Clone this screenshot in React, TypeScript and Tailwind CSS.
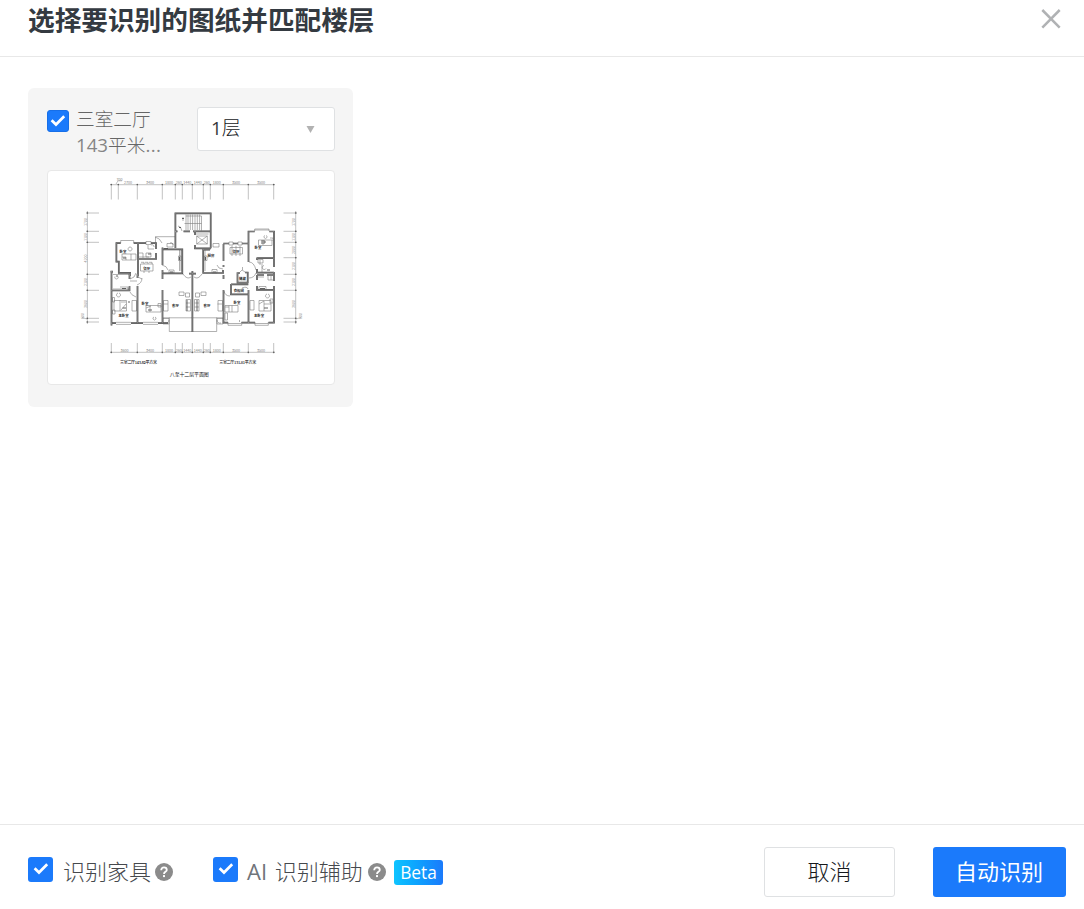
import type { ReactNode } from "react";

const WALLS = [
  "M120.7 243.2H116.4V261.7H118.8V272.9H130V276M133.7 243.2H138V276",
  "M138 243.2H146M151 243.2H156V249M156 253V259H138M111.5 271V325.5M110.5 271.6H113",
  "M162.5 247.5V265M162.5 270V273.3H182.3V249.3H163",
  "M175.4 232.3V213.3H210.7V248.3M175.4 231V248M175 231.4H177.5M183.5 231.4H190M193 231.4H210M195 231V235M195 245V248.3H211",
  "M203.2 249V273H223V270M223.5 244V261M223.5 265V267M223.5 275V279M203.2 249.6H210",
  "M192.4 271V332M189 273.6H196",
  "M223.3 243.5H229M233 243.5H238M242 243.5H248.3M254.7 231.5H248.5V262M269.3 231.5H274V267M274 272V281M274 286V323.5",
  "M256.7 258.2H274.3M257 257.7V260M257 269V272.7H274M257 275H264M267 275H274M257 275V280M257 286V289.8H273",
  "M237.5 272.3V282.5H247.7V272.5H245M237.3 273H240M231 284.3H248.3M231 284V294.3H248.5M248.5 290V323",
  "M223.5 290V322.6H228M241.5 322.6H255M268.5 322.6H274M111.3 290.5H129.5V286M129.5 274V279M137.5 274V278M137.5 286V323M162.5 274V279M162.5 290V323M111 323.2H116M131 323.2H143M158 323.2H168",
];

const FINE = [
  "M120.7 243V240.5H133.7V243M146 241.5H151V244.5H146ZM229 242H233V245H229ZM238 242H242V245H238Z",
  "M254.7 231V229H269V231M254.7 230H269M228 322V325.3H241.7V322M255 322V325.3H268.3V322M116 322.3H131M116 324.4H131M143 322.3H158M143 324.4H158M228 323.5H241M255 323.5H268",
  "M186 216H201.5V230.5M184.5 223.5H201.5M188 214.5V230M190.3 214.5V230M192.6 214.5V230M195 214.5V230M197.3 214.5V230M199.6 214.5V230M186 214.5V230",
  "M196.7 236H207.3V244H196.7ZM196.7 236L207.3 244M207.3 236L196.7 244M195 234H208.5",
  "M155.5 236.7H175M155.5 236.7V243M155 237Q160 238 162 243M167 243.5H173V247H167ZM170 243a2 2 0 0 1 3 2M179.5 250V271M181 250V271M169 270H174V273H169ZM205 250V271M212 269.5H217V273H212ZM213 243.5H219V247H213ZM178.5 256H181V260.5H178.5ZM204.5 256H207V260.5H204.5Z",
  "M162 317.8H223.3M169.3 317.5V331.5H216.7V317.5M163 318.5H169V324H163ZM217 318.5H223V324H217ZM165 323a3 3 0 0 0 4 -3M221 323a3 3 0 0 1 -4 -3",
  "M122 254H136V260H122ZM122 257H126V260M131 254V260M130 247a2 2 0 1 0 .1 0M138.5 253H143V258M148 245V249H154M151 245a2 2 0 0 1 3 2M138 257H149M146 253H151V257H146Z",
  "M140.5 264H153V271H140.5ZM141 262.3H144V264M145 262.3H148V264M149 262.3H152V264M144 271V273M149 271V273M230 247.5H242.5V254H230ZM232 245.8V256M236 245.8V256M240 245.8V256",
  "M113 274.5H129M115 276.5a1.7 1.7 0 1 0 3 0M120 287H128V290M113 289H129M130 281H137M130 279Q135 278 136 273M142 278Q142 283 137 285M130 292Q131 295 136 297M138 277L142 279",
  "M114 300.5H126.5V311H114ZM120 300V311M121 302H126M121 310L126 304M112.5 297.5H114.5V302H112.5ZM112.5 310H115V314H112.5ZM132 300.5H136.5V311H132ZM118 293a2 2 0 1 0 1 0",
  "M146 305.5H161V312H146ZM150 305.5V312M146 308L151 306M158 303.5H161V307H158ZM154 317a1.5 1.5 0 1 0 1 0",
  "M163.5 300.5H168V311H163.5ZM179 292H184V295.5H179ZM185.5 293H189.5V297H185.5ZM186 299.5H190.5V311H186ZM186 303H190M186 307H190M194.5 299.5H199V311H194.5ZM194.5 303H199M194.5 307H199M195.5 293H199.5V297H195.5ZM201 292H206V295.5H201ZM218 300.5H222.5V311H218ZM163.5 304H168M217.5 304H222",
  "M225 305.5H238V312H225ZM229 305.5V312M232 305.5V312M225 313H227.5V320H225ZM225 307H229M259 300.5H271V311H259ZM264 301V311M264 304H271M259 304L264 301M270 299H273V303H270ZM250 300.5H254V310H250ZM267 294a2 2 0 1 0 1 0",
  "M258.5 240H272V245.5H258.5ZM263 240V245M270 238H273V241M265 235.5a1.5 1.5 0 1 0 1 0M258 259.5H263V263H258ZM260 260V265M264 265.5a2 2 0 1 0 2 3M262 264V272M258 277H264M268 275V280H273M259 286.5H266V289.5H259ZM271 276V280",
  "M223 269Q218 269 217 265M162 265Q167 266 168 270M183 274Q187 280 191 277M194 277Q198 280 202 274M224 291Q225 296 230 296M249 262Q254 262 256 270M240 272L242 270L245 272M249 278Q254 278 256 273M242.5 267V270M242 288Q247 286 248 289M178 226Q181 226 182 231M183 217V221",
];

const DETAILS = "M182 218.5H184M179 227.5H181M261 241H265V243H261M123 258H126M128 302H130M148 310H152M187 300V311M197 300V311M122.5 308H126M264 308H268M170 272H173M213 272H216M122 288.5H126M260 288.5H265M179.5 257V260M205.5 257V260M164 248.5H168M148 254H151M267 270H270M116 276H118M239 321H240";

const TOP_TICKS = [111.3, 118.3, 137.3, 162.3, 175.3, 182.3, 192.3, 203.3, 210.3, 223.3, 248.3, 273.7];
const BOTTOM_TICKS = TOP_TICKS.filter((x) => x !== 118.3);
const LEFT_TICKS = [213, 231.3, 242.3, 274.3, 290.3, 318.3, 322];
const RIGHT_TICKS = [213, 231.3, 242.3, 257.7, 274.3, 290.3, 318.3, 322];

const SPANS: [number, string][] = [
  [150, "3400"], [169, "1800"], [178.8, "260"], [187.3, "1440"], [197.8, "1440"],
  [206.8, "260"], [216.8, "1800"], [236, "3500"], [261, "3500"],
];

const SIDE_SPANS: [number, number, string][] = [
  [86.6, 222, "1700"], [86.6, 237, "1100"], [86.6, 258.5, "4200"], [86.6, 282, "2100"], [86.6, 304, "3600"], [83.6, 316, "600"],
  [294.8, 222, "1700"], [294.8, 237, "1100"], [294.8, 250, "2000"], [294.8, 266, "2100"], [294.8, 282, "2100"], [294.8, 304, "3600"], [301.6, 316, "600"],
];

const ROOMS: [number, number, string][] = [
  [123, 253, "卧室"], [146.7, 269.5, "餐厅"], [123.5, 317.3, "主卧室"], [145, 304.8, "卧室"],
  [175.5, 307.3, "客厅"], [207, 307.3, "客厅"], [211, 256.8, "厨房"],
  [236, 253, "餐厅"], [258, 249.2, "卧室"], [242.5, 279.8, "储藏"], [238.8, 291.6, "衣帽间"],
  [237, 303.8, "卧室"], [259, 316.8, "主卧室"],
];

function FloorPlan() {
  return (
    <svg viewBox="48 171 286 213" className="block h-[213px] w-[286px] font-['Noto_Sans_CJK_SC',sans-serif]" fill="none">
      <g stroke="#a0a0a0" strokeWidth=".65">
        <path d="M110 184.7H275M110 352.3H275M87.4 211V324M295.7 211V324M116 184L118 180.8H122M82 317.5L87 319M296 319L301 317.5" />
        {TOP_TICKS.map((x) => <path key={x} d={`M${x} 184V199.5`} />)}
        {BOTTOM_TICKS.map((x) => <path key={x} d={`M${x} 343V353.5`} />)}
        {LEFT_TICKS.map((y) => <path key={y} d={`M86 ${y}H99`} />)}
        {RIGHT_TICKS.map((y) => <path key={y} d={`M283.5 ${y}H297`} />)}
      </g>
      <g fill="#5c5c5c">
        {TOP_TICKS.map((x) => <circle key={x} cx={x} cy="184.6" r=".8" />)}
        {BOTTOM_TICKS.map((x) => <circle key={x} cx={x} cy="352.3" r=".8" />)}
        {LEFT_TICKS.map((y) => <circle key={y} cx="87.4" cy={y} r=".8" />)}
        {RIGHT_TICKS.map((y) => <circle key={y} cx="295.7" cy={y} r=".8" />)}
      </g>
      <g fill="#858585" fontSize="3.7" textAnchor="middle">
        <text x="119.5" y="180.8">700</text>
        <text x="128" y="183.8">2700</text>
        <text x="124.5" y="351.6">3600</text>
        {SPANS.map(([x, t]) => <text key={x} x={x} y="183.8">{t}</text>)}
        {SPANS.map(([x, t]) => <text key={x} x={x} y="351.6">{t}</text>)}
        {SIDE_SPANS.map(([x, y, t]) => (
          <text key={`${x}-${y}`} transform={`translate(${x} ${y}) rotate(-90)`}>{t}</text>
        ))}
      </g>
      <path d={FINE.join("")} stroke="#7c7c7c" strokeWidth=".6" />
      <path d={DETAILS} stroke="#505050" strokeWidth=".9" />
      <path d={WALLS.join("")} stroke="#424242" strokeWidth="1.7" />
      <path d={WALLS.join("")} stroke="#b0b0b0" strokeWidth=".5" />
      <g fill="#222222" fontSize="3.4" fontWeight="700" textAnchor="middle">
        {ROOMS.map(([x, y, t]) => <text key={`${x}-${y}`} x={x} y={y}>{t}</text>)}
      </g>
      <g fill="#222222" textAnchor="middle">
        <text x="138.5" y="364.3" fontSize="4" fontWeight="500" textLength="37">三室二厅143.62平方米</text>
        <text x="237.7" y="364.3" fontSize="4" fontWeight="500" textLength="37">三室二厅131.81平方米</text>
        <text x="189.3" y="376" fontSize="5" textLength="39">八至十二层平面图</text>
      </g>
    </svg>
  );
}

function Checkbox({ small = false }: { small?: boolean }) {
  return (
    <span
      role="checkbox"
      aria-checked="true"
      className={`flex shrink-0 items-center justify-center rounded-[3px] bg-[#1b7afb] ${small ? "size-[22px] border border-[#176fe8]" : "size-[25px]"}`}
    >
      <svg viewBox="0 0 16 13" className="mb-[2px] h-[13px] w-4" fill="none">
        <path d="M1.6 6.2L6 10.5L14.2 2.3" stroke="#fff" strokeWidth="2.7" />
      </svg>
    </span>
  );
}

function Help() {
  return (
    <svg viewBox="0 0 18 18" className="size-[18px] shrink-0" fill="none">
      <circle cx="9" cy="9" r="9" fill="#8b8b8b" />
      <path d="M6.2 7.2C6.2 5.4 7.4 4.4 9 4.4S11.8 5.4 11.8 6.9C11.8 8.8 9 8.9 9 10.9" stroke="#fff" strokeWidth="1.8" />
      <rect x="8" y="12.1" width="2" height="2" fill="#fff" />
    </svg>
  );
}

function Label({ children }: { children: ReactNode }) {
  return <span className="mb-[2px] whitespace-nowrap text-[22px] leading-8 font-light text-[#46494d]">{children}</span>;
}

export default function App() {
  return (
    <div className="flex h-[909px] w-[1084px] flex-col overflow-hidden bg-white font-['Open_Sans','Noto_Sans_CJK_SC',sans-serif]">
      <header className="flex h-[57px] shrink-0 items-start justify-between border-b border-[#e8e8e8] pr-[23px] pl-7">
        <h1 className="text-[26.67px] leading-10 font-bold text-[#343a41]">选择要识别的图纸并匹配楼层</h1>
        <button aria-label="关闭" className="mt-[9px]">
          <svg viewBox="0 0 20 20" className="block size-5" fill="none">
            <path d="M1.3 1L18.7 18.6M18.7 1L1.3 18.6" stroke="#b0b2b4" strokeWidth="2.5" />
          </svg>
        </button>
      </header>

      <main className="flex-1 px-7 pt-[31px]">
        <section className="h-[319px] w-[325px] rounded-md bg-[#f5f5f5] px-[19px] pt-[19px]">
          <div className="flex h-[63px] items-start">
            <div className="mt-[3px]"><Checkbox small /></div>
            <div className="-mt-px ml-[7px] w-[121px] shrink-0 text-[18.7px] leading-[26px] font-light text-[#666666]">
              <div>三室二厅</div>
              <div><span className="font-normal text-[#858585]">143</span>平米<span className="font-normal tracking-[0.4px] text-[#858585]">...</span></div>
            </div>
            <button className="flex h-11 w-[138px] shrink-0 items-center justify-between rounded-[3px] border border-[#dfe1e3] bg-white pr-[19px] pb-[2px] pl-[13px] text-[18.9px] font-light text-[#16181b]">
              <span><span className="font-normal text-[#33363a]">1</span>层</span>
              <svg viewBox="0 0 9 7" className="mt-[2px] h-[7px] w-[9px]"><path d="M.5 0H8.5L4.5 7Z" fill="#b2b2b2" /></svg>
            </button>
          </div>
          <div className="h-[215px] w-[288px] rounded-sm border border-[#e8e8e8] bg-white">
            <FloorPlan />
          </div>
        </section>
      </main>

      <footer className="flex h-[85px] shrink-0 items-start border-t border-[#e8e8e8] pr-[18px] pl-7">
        <div className="mt-8 flex w-[145px]">
          <Checkbox />
          <div className="-mt-px ml-[10px] flex h-8 w-[110px] shrink-0 items-center justify-between"><Label>识别家具</Label><Help /></div>
        </div>
        <div className="mt-8 ml-10 flex">
          <Checkbox />
          <div className="-mt-px ml-[9px] flex h-8 w-[139px] items-center justify-between">
            <Label><span className="mr-[2px] font-normal text-[#707479]">AI</span> 识别辅助</Label><Help />
          </div>
          <span className="mt-[3px] ml-2 flex h-[25px] w-[49px] items-center justify-center rounded-[3px] bg-linear-to-r from-[#10c4ff] to-[#1b7afb] pt-px text-[17.3px] text-white">Beta</span>
        </div>
        <button className="mt-[22px] ml-auto h-[50px] w-[131px] rounded-[3px] border border-[#dfe1e3] bg-white pb-[2px] text-[22px] font-light text-[#16181b]">取消</button>
        <button className="mt-[22px] ml-[38px] h-[50px] w-[133px] rounded-[3px] bg-[#1b7afb] pr-px pb-[2px] text-[22px] text-white">自动识别</button>
      </footer>
    </div>
  );
}
